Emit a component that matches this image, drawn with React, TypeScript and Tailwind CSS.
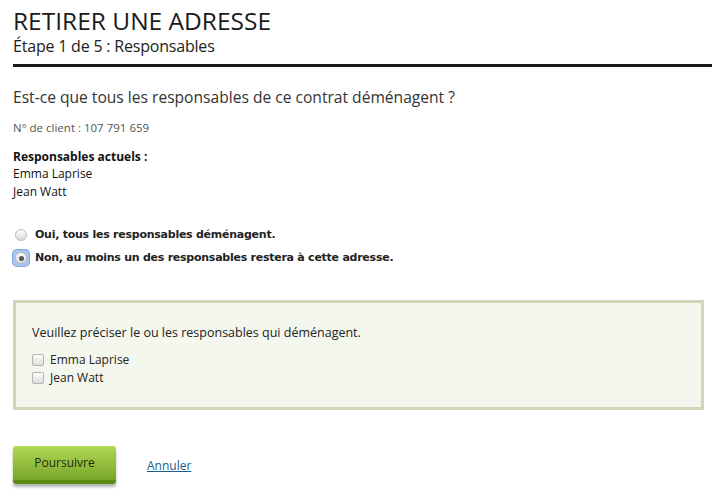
import { useState } from "react";

const responsables = ["Emma Laprise", "Jean Watt"];

function Radio({ checked }: { checked: boolean }) {
  return (
    <span
      className={`flex h-[16px] w-[16px] shrink-0 items-center justify-center rounded-[4px] ${
        checked ? "bg-[#a9c6ee] ring-1 ring-[#7fa8e0]" : ""
      }`}
    >
      <span className="flex h-[12px] w-[12px] items-center justify-center rounded-full border border-[#b9b9b9] bg-gradient-to-b from-[#fdfdfd] to-[#dcdcdc]">
        {checked ? <span className="h-[5px] w-[5px] rounded-full bg-[#555]" /> : null}
      </span>
    </span>
  );
}

export default function App() {
  const [choice, setChoice] = useState<"oui" | "non">("non");
  const [moving, setMoving] = useState<string[]>([]);

  return (
    <div className="min-h-[500px] bg-white px-[13px] pt-[5px] font-['Open_Sans',sans-serif] text-[#222]">
      <header className="border-b-[3px] border-[#1a1a1a] pb-[8px] pr-[8px]">
        <h1 className="text-[24.5px] uppercase leading-[32px] text-[#1a1a1a]">Retirer une adresse</h1>
        <p className="text-[16px] leading-[19px] tracking-[-0.2px] text-[#222]">Étape 1 de 5 : Responsables</p>
      </header>

      <div className="pr-[8px]">
        <h2 className="mt-[18px] text-[15.6px] leading-[24px] text-[#333]">
          Est-ce que tous les responsables de ce contrat déménagent ?
        </h2>
        <p className="mt-[11px] text-[11.5px] leading-[16px] text-[#555]">N° de client : 107 791 659</p>

        <div className="mt-[12px] text-[12px] leading-[18px] text-[#111]">
          <p className="font-bold leading-[17px]">Responsables actuels :</p>
          {responsables.map((r) => (
            <p key={r}>{r}</p>
          ))}
        </div>

        <div className="mt-[25px] flex flex-col gap-[5px] font-['DejaVu_Sans',sans-serif] text-[11px] font-bold leading-[18px] tracking-[-0.25px] text-[#222]">
          <label className="flex cursor-pointer items-center gap-[6px]" onClick={() => setChoice("oui")}>
            <Radio checked={choice === "oui"} />
            <span>Oui, tous les responsables déménagent.</span>
          </label>
          <label className="flex cursor-pointer items-center gap-[6px]" onClick={() => setChoice("non")}>
            <Radio checked={choice === "non"} />
            <span>Non, au moins un des responsables restera à cette adresse.</span>
          </label>
        </div>

        {choice === "non" ? (
          <div className="mt-[33px] border-[3px] border-[#d0d7b8] bg-[#f4f7ee] px-[16px] pb-[20px] pt-[20px] text-[12px] text-[#222]">
            <p className="text-[12.5px] leading-[20px]">Veuillez préciser le ou les responsables qui déménagent.</p>
            <div className="mt-[8px] flex flex-col">
              {responsables.map((r) => {
                const on = moving.includes(r);
                return (
                  <label
                    key={r}
                    className="flex cursor-pointer items-center gap-[6px] leading-[18px]"
                    onClick={() => setMoving(on ? moving.filter((m) => m !== r) : [...moving, r])}
                  >
                    <span className="flex h-[12px] w-[12px] items-center justify-center rounded-[2px] border border-[#b3b3b3] bg-gradient-to-b from-[#fdfdfd] to-[#dedede] text-[9px] leading-none">
                      {on ? "✓" : null}
                    </span>
                    <span>{r}</span>
                  </label>
                );
              })}
            </div>
          </div>
        ) : null}

        <div className="mt-[36px] flex items-center gap-[31px]">
          <button
            type="button"
            className="h-[38px] w-[103px] rounded-[3px] border-b-[4px] border-[#5b8a12] bg-gradient-to-b from-[#b2d858] to-[#78a626] text-[12px] text-[#1f2a0a] shadow-[0_3px_3px_rgba(0,0,0,0.3)]"
          >
            Poursuivre
          </button>
          <a href="#" className="pt-[1px] text-[12px] text-[#1b5d8c] underline">
            Annuler
          </a>
        </div>
      </div>
    </div>
  );
}
